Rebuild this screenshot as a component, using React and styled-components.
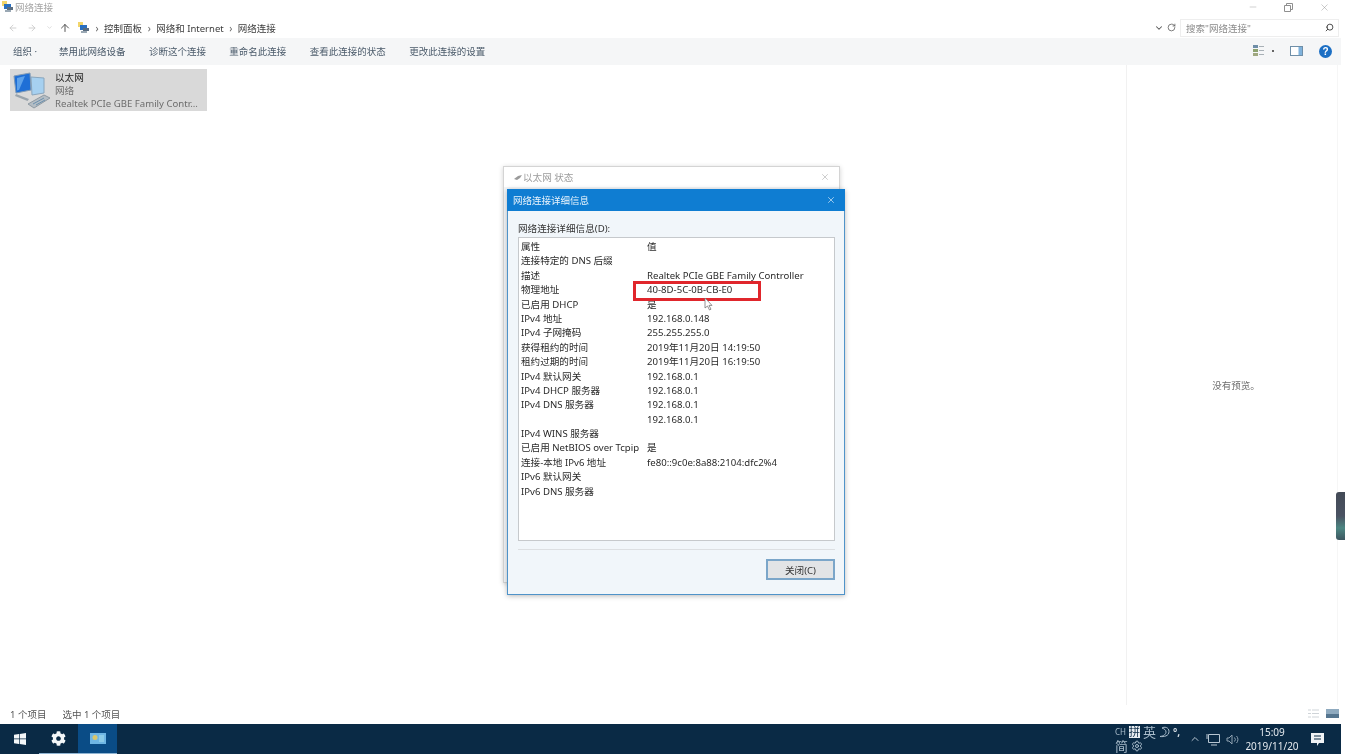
import React from 'react';
import styled, { createGlobalStyle } from 'styled-components';
import { RotateCw, Search, ChevronDown, ChevronUp, ArrowUp, ArrowLeft, ArrowRight, X, Minus, Settings } from 'lucide-react';
import { FaCog } from 'react-icons/fa';

const GlobalStyle = createGlobalStyle`
  html, body { margin: 0; padding: 0; background: #fff; }
  body {
    font-family: "Noto Sans", "Noto Sans CJK SC", sans-serif;
    font-size: 9.6px;
    color: #333;
    overflow: hidden;
  }
`;

const rows = [
  ['属性', '值'],
  ['连接特定的 DNS 后缀', ''],
  ['描述', 'Realtek PCIe GBE Family Controller'],
  ['物理地址', '40-8D-5C-0B-CB-E0'],
  ['已启用 DHCP', '是'],
  ['IPv4 地址', '192.168.0.148'],
  ['IPv4 子网掩码', '255.255.255.0'],
  ['获得租约的时间', '2019年11月20日 14:19:50'],
  ['租约过期的时间', '2019年11月20日 16:19:50'],
  ['IPv4 默认网关', '192.168.0.1'],
  ['IPv4 DHCP 服务器', '192.168.0.1'],
  ['IPv4 DNS 服务器', '192.168.0.1'],
  ['', '192.168.0.1'],
  ['IPv4 WINS 服务器', ''],
  ['已启用 NetBIOS over Tcpip', '是'],
  ['连接-本地 IPv6 地址', 'fe80::9c0e:8a88:2104:dfc2%4'],
  ['IPv6 默认网关', ''],
  ['IPv6 DNS 服务器', ''],
];

const commands = ['禁用此网络设备', '诊断这个连接', '重命名此连接', '查看此连接的状态', '更改此连接的设置'];

const Page = styled.div`
  position: relative;
  width: 1345px;
  height: 754px;
  display: flex;
  flex-direction: column;
  overflow: hidden;
  background: #fff;
  filter: blur(0.3px);
`;

const TitleBar = styled.div`
  height: 14px;
  margin-bottom: 3px;
  display: flex;
  align-items: center;
  gap: 1px;
  padding-left: 2px;
  color: #a4a4a4;
  font-size: 9.5px;
`;

const WindowButtons = styled.div`
  margin-left: auto;
  display: flex;
  align-items: center;
  gap: 26px;
  padding-right: 15px;
  color: #8f8f8f;
`;

const AddressRow = styled.div`
  height: 21px;
  display: flex;
  align-items: center;
`;

const NavArrows = styled.div`
  width: 78px;
  padding-left: 8px;
  box-sizing: border-box;
  display: flex;
  align-items: center;
  gap: 9px;
  color: #c8c8c8;
`;

const UpArrow = styled(ArrowUp)`
  margin-left: -3px;
  color: #555;
`;

const Crumbs = styled.div`
  flex: 1;
  display: flex;
  align-items: center;
  gap: 5.5px;
  font-size: 9.5px;
  color: #3c3c3c;
`;

const CrumbSep = styled.span`
  color: #666;
  font-size: 10px;
`;

const AddressTools = styled.div`
  width: 26px;
  display: flex;
  align-items: center;
  gap: 3px;
  color: #555;
`;

const SearchBox = styled.div`
  width: 159px;
  height: 18px;
  margin-right: 6px;
  box-sizing: border-box;
  padding: 0 4px 0 5px;
  border: 1px solid #eeeeee;
  display: flex;
  align-items: center;
  justify-content: space-between;
  color: #8a8a8a;
  font-size: 9.5px;
`;

const CommandBar = styled.div`
  height: 27px;
  box-sizing: border-box;
  padding: 0 0 1px 13px;
  margin-right: 4px;
  background: #f5f6f7;
  display: flex;
  align-items: center;
  font-size: 9.5px;
  color: #4a5a6a;
`;

const Command = styled.span`
  margin-right: 23.4px;
`;

const OrgCommand = styled(Command)`
  margin-right: 22px;
`;

const CommandIcons = styled.div`
  margin-left: auto;
  padding-right: 9px;
  display: flex;
  align-items: center;
  gap: 16px;
`;

const ViewMenu = styled.div`
  display: flex;
  align-items: center;
  gap: 7px;
`;

const MenuDot = styled.span`
  width: 2px;
  height: 2px;
  background: #666;
`;

const Main = styled.div`
  flex: 1;
  display: flex;
  min-height: 0;
`;

const Content = styled.div`
  flex: 1;
  padding: 4px 0 0 10px;
`;

const FileItem = styled.div`
  width: 197px;
  height: 42px;
  background: #d9d9d9;
  display: flex;
  align-items: center;
  color: #6d6d6d;
  line-height: 13px;
`;

const FileIcon = styled.div`
  width: 45px;
  padding-left: 3px;
  box-sizing: border-box;
  display: flex;
`;

const FileName = styled.div`
  color: #1c1c1c;
`;

const PreviewPane = styled.div`
  width: 202px;
  padding-left: 8px;
  margin-right: 7px;
  border-left: 1px solid #f1f1f1;
  border-right: 1px solid #f6f6f6;
  display: flex;
  align-items: center;
  justify-content: center;
  color: #6e6e6e;
  font-size: 9.5px;
`;

const StatusBar = styled.div`
  height: 19px;
  box-sizing: border-box;
  display: flex;
  align-items: center;
  padding: 0 6px 2px 10px;
  gap: 16px;
  color: #555;
  font-size: 9.5px;
`;

const ViewIcons = styled.div`
  margin-left: auto;
  display: flex;
  align-items: center;
  gap: 7px;
`;

const Taskbar = styled.div`
  height: 30px;
  margin-right: 4px;
  background: #0a2a45;
  display: flex;
  align-items: center;
  color: #d5dde4;
`;

const TaskSlot = styled.div`
  width: 39px;
  height: 30px;
  box-sizing: border-box;
  display: flex;
  align-items: center;
  justify-content: center;
  background: ${(p) => (p.$active ? '#0a4c86' : 'transparent')};
  border-bottom: 1px solid ${(p) => (p.$open ? '#8fb4d2' : 'transparent')};
`;

const Tray = styled.div`
  margin-left: auto;
  padding-right: 7px;
  display: flex;
  align-items: center;
  height: 30px;
`;

const ImeBlock = styled.div`
  width: 72px;
  display: flex;
  flex-wrap: wrap;
  align-items: center;
  column-gap: 3px;
  line-height: 14px;
  font-size: 13px;
  color: #a9bccb;
`;

const ImeSmall = styled.span`
  font-size: 8px;
`;

const ImeBox = styled.span`
  background: #e8edf1;
  color: #0a2a45;
  font-size: 11px;
  line-height: 12px;
`;

const ImeMark = styled.span`
  font-size: 10px;
  font-weight: 700;
  color: #d5dde4;
`;

const TrayIcons = styled.div`
  width: 56px;
  box-sizing: border-box;
  padding-left: 2px;
  display: flex;
  align-items: center;
  gap: 5px;
  color: #b8c6d2;
`;

const Clock = styled.div`
  width: 58px;
  text-align: center;
  line-height: 14px;
  font-size: 10px;
  color: #e4e9ee;
`;

const Notify = styled.div`
  width: 33px;
  display: flex;
  justify-content: center;
`;

const SideWidget = styled.div`
  position: absolute;
  right: 0;
  top: 492px;
  width: 9px;
  height: 48px;
  border-radius: 3px 0 0 3px;
  background: linear-gradient(#434a56 0%, #4a5262 50%, #4c8682 75%, #3d5660 100%);
`;

const BackDialog = styled.div`
  position: absolute;
  left: 503px;
  top: 166px;
  width: 337px;
  height: 417px;
  box-sizing: border-box;
  background: #f3f6f9;
  border: 1px solid #d4d4d4;
  box-shadow: 0 1px 5px rgba(0, 0, 0, 0.18);
`;

const BackTitle = styled.div`
  height: 20px;
  background: #fff;
  display: flex;
  align-items: center;
  justify-content: space-between;
  padding: 0 9px 0 10px;
  color: #9c9c9c;
  font-size: 9.6px;
`;

const BackLabel = styled.span`
  display: flex;
  align-items: center;
  gap: 1px;
`;

const Dialog = styled.div`
  position: absolute;
  left: 507px;
  top: 189px;
  width: 338px;
  height: 406px;
  box-sizing: border-box;
  display: flex;
  flex-direction: column;
  background: #f1f6fa;
  border: 1px solid #4f93c9;
  border-top: none;
  box-shadow: 0 1px 5px rgba(0, 0, 0, 0.28);
`;

const DialogTitle = styled.div`
  height: 22px;
  margin: 0 -1px;
  flex-shrink: 0;
  box-sizing: border-box;
  padding: 0 9px 1px 6px;
  background: #0f7dd2;
  color: #eaf4fc;
  display: flex;
  align-items: center;
  justify-content: space-between;
  font-size: 9.5px;
`;

const DialogBody = styled.div`
  flex: 1;
  padding: 11px 9px 0 10px;
  display: flex;
  flex-direction: column;
`;

const ListLabel = styled.div`
  height: 15px;
  line-height: 14px;
  color: #333;
  font-size: 9.6px;
`;

const DetailList = styled.div`
  position: relative;
  height: 304px;
  box-sizing: border-box;
  background: #fff;
  border: 1px solid #c6c9cc;
  padding: 2px 0 0 2px;
`;

const DetailRow = styled.div`
  display: grid;
  grid-template-columns: 126px 1fr;
  height: 14.4px;
  line-height: 14.4px;
  font-size: 9.6px;
  color: #2a2a2a;
  white-space: nowrap;
`;

const Highlight = styled.div`
  position: absolute;
  left: 114px;
  top: 43px;
  width: 128px;
  height: 20px;
  box-sizing: border-box;
  border: 3px solid #e0262c;
`;

const Cursor = styled.svg`
  position: absolute;
  left: 185px;
  top: 59px;
`;

const Divider = styled.div`
  height: 1px;
  margin-top: 8px;
  background: #dcdfe2;
`;

const ButtonRow = styled.div`
  display: flex;
  justify-content: flex-end;
  padding-top: 9px;
`;

const CloseButton = styled.button`
  width: 69px;
  height: 21px;
  box-sizing: border-box;
  padding: 0;
  border: 2px solid #7ba6c9;
  background: #e2e4e6;
  color: #333;
  font-family: inherit;
  font-size: 9.6px;
`;

const NetIcon = () => (
  <svg width="38" height="38" viewBox="0 0 38 38">
    <path d="M18 6l13 1v15l-12 2z" fill="#a6d0f0" stroke="#8aa6bd" />
    <path d="M1 5l16-3 1 17-15 3z" fill="#1f6fd6" stroke="#7f9ab5" />
    <path d="M4 7l8-2-6 14-2 .5z" fill="#5ea2ea" />
    <path d="M3 23l13 5-1.5 2L2 25z" fill="#9aa4ac" />
    <path d="M15 33l16-9 6 3-16 10z" fill="#b4bdc4" stroke="#8f9aa3" />
    <path d="M20 33l11-6M23 34l9-5" stroke="#6b90ae" strokeWidth="1" />
  </svg>
);

const SmallNetIcon = () => (
  <svg width="12" height="12" viewBox="0 0 12 12">
    <rect x="0" y="0" width="5" height="5" fill="#f2d56b" />
    <rect x="2" y="3" width="7" height="5" fill="#2a6fc0" />
    <rect x="5" y="6" width="6" height="3" fill="#5a6d80" />
    <rect x="3" y="9" width="6" height="2" fill="#9aa8b4" />
  </svg>
);

const PlugIcon = () => (
  <svg width="8" height="6" viewBox="0 0 8 6">
    <path d="M0 5l4-3 4-1-2 3-3 2z" fill="#9a9a9a" />
  </svg>
);

const WinLogo = () => (
  <svg width="12" height="12" viewBox="0 0 12 12" fill="#f4f7f9">
    <path d="M0 1.7l5-.7v4.6H0zM5.7.9L12 0v5.6H5.7zM0 6.3h5V11l-5-.7zM5.7 6.3H12V12l-6.3-.9z" />
  </svg>
);

const ViewMenuIcon = () => (
  <svg width="12" height="12" viewBox="0 0 12 12">
    <rect x="0" y="0" width="5" height="3" fill="#6f8ea8" />
    <rect x="0" y="4" width="5" height="3" fill="#8da26f" />
    <rect x="0" y="8" width="5" height="3" fill="#a0a880" />
    <path d="M6 1.5h5M6 5.5h5M6 9.5h5" stroke="#a8b0b6" />
  </svg>
);

const PaneIcon = () => (
  <svg width="13" height="10" viewBox="0 0 13 10">
    <rect x="0.5" y="0.5" width="12" height="9" fill="#fff" stroke="#6f8fa8" />
    <rect x="8.5" y="1" width="3.5" height="8" fill="#7fb2dc" />
  </svg>
);

const HelpIcon = () => (
  <svg width="13" height="13" viewBox="0 0 13 13">
    <circle cx="6.5" cy="6.5" r="6.5" fill="#1c6fc4" />
    <text x="6.5" y="10" fontSize="10" fontWeight="700" textAnchor="middle" fill="#fff" fontFamily="Liberation Sans, sans-serif">?</text>
  </svg>
);

const DetailsViewIcon = () => (
  <svg width="11" height="9" viewBox="0 0 11 9" stroke="#cfd4d8">
    <path d="M0 1h3M0 4.5h3M0 8h3M4 1h7M4 4.5h7M4 8h7" />
  </svg>
);

const TilesViewIcon = () => (
  <svg width="13" height="9" viewBox="0 0 13 9">
    <rect width="13" height="9" fill="#8faabf" />
    <rect y="5" width="13" height="4" fill="#55758f" />
  </svg>
);

const AppThumb = () => (
  <svg width="16" height="11" viewBox="0 0 16 11">
    <rect width="16" height="11" fill="#6fb6e4" />
    <circle cx="5" cy="4.5" r="2.5" fill="#d9c66b" />
    <rect x="9" y="2" width="5" height="7" fill="#8ccbe8" />
  </svg>
);

const ScreenIcon = () => (
  <svg width="15" height="13" viewBox="0 0 15 13" fill="none" stroke="#b8c6d2">
    <path d="M2.5 1.5h11v8h-11zM5 12h6M1 1v5" />
  </svg>
);

const SpeakerIcon = () => (
  <svg width="14" height="11" viewBox="0 0 14 11" fill="none" stroke="#8fa2b2">
    <path d="M1 4h2l3-3v9L3 7H1zM8.5 3.5a3 3 0 0 1 0 4M10.5 2a5 5 0 0 1 0 7" />
  </svg>
);

const MoonIcon = () => (
  <svg width="11" height="12" viewBox="0 0 11 12" fill="none" stroke="#a9bccb">
    <path d="M3 2c2-1.500 7-1 7 3.500S5 11 1 10.500C5 10 7 8 7 6S5.500 3 3 2z" />
  </svg>
);

const NotifyIcon = () => (
  <svg width="13" height="13" viewBox="0 0 13 13">
    <path d="M0 0h13v10H8l-2 3v-3H0z" fill="#f0f3f5" />
    <path d="M3 3h7M3 6h7" stroke="#0a2a45" />
  </svg>
);

const App = () => (
  <Page>
    <GlobalStyle />
    <TitleBar>
      <SmallNetIcon />
      网络连接
      <WindowButtons>
        <Minus size={10} strokeWidth={1} />
        <svg width="9" height="9" viewBox="0 0 9 9" fill="none" stroke="#8f8f8f">
          <path d="M.5 2.500h6v6h-6zM2.500 2.500v-2h6v6h-2" />
        </svg>
        <X size={11} strokeWidth={1} />
      </WindowButtons>
    </TitleBar>
    <AddressRow>
      <NavArrows>
        <ArrowLeft size={10} />
        <ArrowRight size={10} />
        <ChevronDown size={7} />
        <UpArrow size={12} />
      </NavArrows>
      <Crumbs>
        <SmallNetIcon />
        <CrumbSep>›</CrumbSep>
        <span>控制面板</span>
        <CrumbSep>›</CrumbSep>
        <span>网络和 Internet</span>
        <CrumbSep>›</CrumbSep>
        <span>网络连接</span>
      </Crumbs>
      <AddressTools>
        <ChevronDown size={10} strokeWidth={2.5} />
        <RotateCw size={9} />
      </AddressTools>
      <SearchBox>
        搜索"网络连接"
        <Search size={9} strokeWidth={2.5} color="#444" style={{ transform: 'scaleX(-1)' }} />
      </SearchBox>
    </AddressRow>
    <CommandBar>
      <OrgCommand>组织 ·</OrgCommand>
      {commands.map((c) => (
        <Command key={c}>{c}</Command>
      ))}
      <CommandIcons>
        <ViewMenu>
          <ViewMenuIcon />
          <MenuDot />
        </ViewMenu>
        <PaneIcon />
        <HelpIcon />
      </CommandIcons>
    </CommandBar>
    <Main>
      <Content>
        <FileItem>
          <FileIcon>
            <NetIcon />
          </FileIcon>
          <div>
            <FileName>以太网</FileName>
            <div>网络</div>
            <div>Realtek PCIe GBE Family Contr...</div>
          </div>
        </FileItem>
      </Content>
      <PreviewPane>没有预览。</PreviewPane>
    </Main>
    <StatusBar>
      <span>1 个项目</span>
      <span>选中 1 个项目</span>
      <ViewIcons>
        <DetailsViewIcon />
        <TilesViewIcon />
      </ViewIcons>
    </StatusBar>
    <Taskbar>
      <TaskSlot><WinLogo /></TaskSlot>
      <TaskSlot $open><FaCog size={15} color="#f4f7f9" /></TaskSlot>
      <TaskSlot $active $open><AppThumb /></TaskSlot>
      <Tray>
        <ImeBlock>
          <ImeSmall>CH</ImeSmall>
          <ImeBox>拼</ImeBox>
          <span>英</span>
          <MoonIcon />
          <ImeMark>°,</ImeMark>
          <span>简</span>
          <Settings size={12} />
        </ImeBlock>
        <TrayIcons>
          <ChevronUp size={12} />
          <ScreenIcon />
          <SpeakerIcon />
        </TrayIcons>
        <Clock>
          <div>15:09</div>
          <div>2019/11/20</div>
        </Clock>
        <Notify><NotifyIcon /></Notify>
      </Tray>
    </Taskbar>
    <SideWidget />
    <BackDialog>
      <BackTitle>
        <BackLabel><PlugIcon />以太网 状态</BackLabel>
        <X size={10} strokeWidth={1.2} />
      </BackTitle>
    </BackDialog>
    <Dialog>
      <DialogTitle>
        <span>网络连接详细信息</span>
        <X size={10} strokeWidth={1.5} />
      </DialogTitle>
      <DialogBody>
        <ListLabel>网络连接详细信息(D):</ListLabel>
        <DetailList>
          {rows.map(([name, value], i) => (
            <DetailRow key={i}>
              <span>{name}</span>
              <span>{value}</span>
            </DetailRow>
          ))}
          <Highlight />
          <Cursor width="10" height="14" viewBox="0 0 10 14">
            <path d="M1 1v10l2.500-2 2 4 1.500-.8-2-3.800H8z" fill="#fff" stroke="#777" strokeWidth="0.8" />
          </Cursor>
        </DetailList>
        <Divider />
        <ButtonRow>
          <CloseButton>关闭(C)</CloseButton>
        </ButtonRow>
      </DialogBody>
    </Dialog>
  </Page>
);

export default App;
